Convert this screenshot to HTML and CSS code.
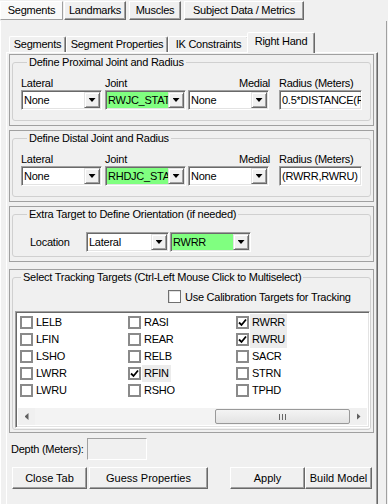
FILE: index.html
```html
<!DOCTYPE html>
<html lang="en">
  <head>
    <meta charset="UTF-8" />
    <title>Segments - Right Hand</title>
    <meta name="viewport" content="width=device-width, initial-scale=1.0" />
    <link rel="stylesheet" href="styles.css">
  </head>

  <body>
    <div class="win">
      <div class="top-tabs">
        <div class="top-tab w1 active">Segments</div>
        <div class="top-tab w2">Landmarks</div>
        <div class="top-tab w3">Muscles</div>
        <div class="top-tab w4">Subject Data / Metrics</div>
      </div>

      <div class="outer">
        <div class="tabs">
          <div class="tab t1">Segments</div>
          <div class="tab t2">Segment Properties</div>
          <div class="tab t3">IK Constraints</div>
          <div class="tab t4 active">Right Hand</div>
        </div>

        <div class="page">
          <!-- proximal -->
          <div class="panel">
            <div class="group joint-group">
              <div class="legend">Define Proximal Joint and Radius</div>
              <div class="fields">
                <div class="field col-lat">
                  <div class="lbl">Lateral</div>
                  <div class="combo"><span class="val">None</span><span class="drop"></span></div>
                </div>
                <div class="field col-joint">
                  <div class="lbl">Joint</div>
                  <div class="combo"><span class="val green">RWJC_STATIC</span><span class="drop"></span></div>
                </div>
                <div class="field col-med">
                  <div class="lbl right">Medial</div>
                  <div class="combo"><span class="val">None</span><span class="drop"></span></div>
                </div>
                <div class="field col-rad">
                  <div class="lbl">Radius (Meters)</div>
                  <div class="textbox"><span>0.5*DISTANCE(RWRR,RWRU)</span></div>
                </div>
              </div>
            </div>
          </div>

          <!-- distal -->
          <div class="panel">
            <div class="group joint-group">
              <div class="legend">Define Distal Joint and Radius</div>
              <div class="fields">
                <div class="field col-lat">
                  <div class="lbl">Lateral</div>
                  <div class="combo"><span class="val">None</span><span class="drop"></span></div>
                </div>
                <div class="field col-joint">
                  <div class="lbl">Joint</div>
                  <div class="combo"><span class="val green">RHDJC_STATIC</span><span class="drop"></span></div>
                </div>
                <div class="field col-med">
                  <div class="lbl right">Medial</div>
                  <div class="combo"><span class="val">None</span><span class="drop"></span></div>
                </div>
                <div class="field col-rad">
                  <div class="lbl">Radius (Meters)</div>
                  <div class="textbox"><span>(RWRR,RWRU)</span></div>
                </div>
              </div>
            </div>
          </div>

          <!-- extra target -->
          <div class="panel p3">
            <div class="group extra-group">
              <div class="legend">Extra Target to Define Orientation (if needed)</div>
              <div class="loc-row">
                <span class="loc-lbl">Location</span>
                <div class="combo loc1"><span class="val">Lateral</span><span class="drop"></span></div>
                <div class="combo loc2"><span class="val green">RWRR</span><span class="drop"></span></div>
              </div>
            </div>
          </div>

          <!-- tracking targets -->
          <div class="panel p4">
            <div class="group track-group">
              <div class="legend">Select Tracking Targets (Ctrl-Left Mouse Click to Multiselect)</div>
              <div class="calib">
                <span class="cb small"></span>
                <span>Use Calibration Targets for Tracking</span>
              </div>
              <div class="list">
                <div class="items" id="items"></div>
                <div class="hscroll">
                  <span class="arrow left"></span>
                  <div class="track"><div class="thumb"><span class="grip"></span></div></div>
                  <span class="arrow right"></span>
                </div>
              </div>
            </div>
          </div>

          <div class="depth-row">
            <span class="depth-lbl">Depth (Meters):</span>
            <div class="textbox disabled"></div>
          </div>

          <div class="actions">
            <button class="b-close">Close Tab</button>
            <button class="b-guess">Guess Properties</button>
            <button class="b-apply">Apply</button>
            <button class="b-build">Build Model</button>
          </div>
        </div>
      </div>
    </div>

    <script>
      // filled row by row, three columns like the checked list box
      const targets = [
        ["LELB", 0], ["RASI", 0], ["RWRR", 1],
        ["LFIN", 0], ["REAR", 0], ["RWRU", 1],
        ["LSHO", 0], ["RELB", 0], ["SACR", 0],
        ["LWRR", 0], ["RFIN", 1], ["STRN", 0],
        ["LWRU", 0], ["RSHO", 0], ["TPHD", 0],
      ];
      const tick =
        '<svg width="9" height="9" viewBox="0 0 9 9"><path d="M1 4.5 L3.5 7 L8 1.5" fill="none" stroke="#000" stroke-width="1.8"/></svg>';
      const box = document.getElementById("items");
      for (const [name, on] of targets) {
        box.innerHTML += `
          <div class="item${on ? " on" : ""}">
            <span class="cb">${on ? tick : ""}</span>
            <span class="name">${name}</span>
          </div>
        `;
      }
    </script>
  </body>
</html>
```

FILE: styles.css
```css
:root {
  --face: #f0f0f0;
  --light: #e3e3e3;
  --shadow: #a0a0a0;
  --dark: #696969;
  --green: #80ff80;
}

* {
  margin: 0;
  padding: 0;
  box-sizing: border-box;
}

body {
  font-family: "Liberation Sans", Arial, sans-serif;
  font-size: 11px;
  letter-spacing: -0.25px;
  color: #000;
  background: var(--face);
}

.win {
  width: 388px;
  height: 504px;
  overflow: hidden;
}

/* top button tabs */
.top-tabs {
  display: flex;
  height: 21px;
  padding-top: 1px;
}

.top-tab {
  height: 19px;
  line-height: 17px;
  text-align: center;
  border: 1px solid;
  border-color: #fff var(--dark) var(--dark) #fff;
  box-shadow: inset -1px -1px var(--shadow);
}

.top-tab.active {
  background: #f9f9f9;
  border-color: #fff var(--shadow) var(--shadow) #fff;
  box-shadow: none;
}

.w1 { width: 63px; }
.w2 { width: 62px; margin-left: 1px; }
.w3 { width: 52px; margin-left: 3px; }
.w4 { width: 120px; margin-left: 3px; }

/* outer page */
.outer {
  width: 387px;
  height: 483px;
  border-left: 1px solid #fff;
  border-right: 1px solid var(--shadow);
  padding-top: 11px;
}

.tabs {
  display: flex;
  align-items: flex-end;
  height: 20px;
  margin-left: 8px;
  position: relative;
  z-index: 1;
}

.tab {
  height: 16px;
  line-height: 14px;
  text-align: center;
  border: 1px solid;
  border-bottom: none;
  border-color: #fff var(--dark) transparent #fff;
  box-shadow: inset -1px 0 var(--shadow);
  border-radius: 2px 2px 0 0;
}

.t1 { width: 57px; }
.t2 { width: 102px; }
.t3 { width: 81px; }

.tab.active {
  width: 68px;
  height: 21px;
  margin-left: -2px;
  margin-bottom: -1px;
  line-height: 16px;
  background: var(--face);
}

.page {
  width: 372px;
  height: 460px;
  margin-left: 5px;
  border: 1px solid;
  border-color: #fff var(--dark) var(--dark) #fff;
  box-shadow: inset -1px 0 var(--shadow);
}

/* sections */
.panel {
  width: 365px;
  height: 72px;
  margin: 1px 0 4px 2px;
  border: 1px solid var(--shadow);
  padding: 7px 2px 0;
}

.panel + .panel {
  margin-top: 0;
}

.panel.p3 {
  height: 56px;
}

.panel.p4 {
  height: 164px;
  margin-top: 7px;
}

.group {
  border: 1px solid #d0d0d0;
  border-radius: 3px;
  padding: 0 8px;
}

.joint-group { height: 59px; }
.extra-group { height: 43px; }
.track-group { height: 153px; padding: 0 0 0 2px; }

.legend {
  width: fit-content;
  margin: -7px 0 0 6px;
  padding: 0 2px;
  line-height: 13px;
  background: var(--face);
}

.fields {
  display: flex;
  margin-top: 7px;
}

.lbl {
  height: 14px;
  line-height: 14px;
  white-space: nowrap;
}

.lbl.right {
  text-align: right;
  margin-right: -1px;
}

.col-lat { width: 81px; }
.col-joint { width: 81px; margin-left: 3px; }
.col-med { width: 81px; margin-left: 2px; }
.col-rad { width: 83px; margin-left: 10px; }

/* combo box */
.combo {
  display: flex;
  height: 20px;
  padding: 1px;
  border: 1px solid;
  border-color: var(--shadow) #fff #fff var(--shadow);
  box-shadow: inset 1px 1px var(--dark), inset -1px -1px var(--light);
  background: #fff;
}

.val {
  flex: 1;
  min-width: 0;
  padding-left: 1px;
  line-height: 16px;
  white-space: nowrap;
  overflow: hidden;
}

.val.green {
  background: var(--green);
}

.drop {
  width: 16px;
  flex: none;
  display: flex;
  align-items: center;
  justify-content: center;
  background: var(--face);
  border: 1px solid;
  border-color: var(--light) var(--dark) var(--dark) var(--light);
  box-shadow: inset 1px 1px #fff, inset -1px -1px var(--shadow);
}

.drop::after {
  content: "";
  width: 7px;
  height: 4px;
  background: #000;
  clip-path: polygon(0 0, 100% 0, 50% 100%);
}

.textbox {
  display: flex;
  height: 20px;
  padding: 1px 2px 0;
  line-height: 16px;
  white-space: nowrap;
  overflow: hidden;
  background: #fff;
  border: 1px solid;
  border-color: var(--shadow) #fff #fff var(--shadow);
  box-shadow: inset 1px 1px var(--dark), inset -1px -1px var(--light);
}

.textbox.disabled {
  width: 60px;
  height: 22px;
  background: var(--face);
  box-shadow: none;
}

/* extra target row */
.loc-row {
  display: flex;
  align-items: center;
  margin-top: 11px;
}

.loc-lbl {
  margin-left: 9px;
  width: 56px;
}

.loc1 { width: 83px; }
.loc2 { width: 81px; margin-left: 1px; }

/* tracking targets */
.calib {
  display: flex;
  align-items: center;
  gap: 4px;
  height: 13px;
  margin: 6px 0 0 153px;
}

.cb {
  width: 13px;
  height: 13px;
  flex: none;
  display: flex;
  align-items: center;
  justify-content: center;
  background: #fff;
  border: 2px solid #8a8a8a;
}

.cb.small {
  border: 1px solid #707070;
  box-shadow: inset 1px 1px #e0e0e0;
}

.list {
  width: 355px;
  height: 117px;
  margin-top: 8px;
  background: #fff;
  border: 1px solid;
  border-color: var(--shadow) #fff #fff var(--shadow);
  box-shadow: inset 1px 1px var(--dark), inset -1px -1px var(--light);
  padding: 2px;
  display: flex;
  flex-direction: column;
}

.items {
  flex: 1;
  display: grid;
  grid-template-columns: 108px 108px 108px;
  grid-auto-rows: 17px;
  padding-left: 2px;
}

.item {
  display: flex;
  align-items: center;
}

.item .name {
  margin-left: 1px;
  padding: 0 2px;
  line-height: 17px;
}

.item.on .name {
  background: #ececec;
}

.hscroll {
  display: flex;
  height: 17px;
  background: #ececec;
}

.arrow {
  width: 17px;
  display: flex;
  align-items: center;
  justify-content: center;
  background: var(--face);
}

.arrow::after {
  content: "";
  width: 4px;
  height: 7px;
  background: #606060;
}

.arrow.left::after {
  clip-path: polygon(100% 0, 100% 100%, 0 50%);
}

.arrow.right::after {
  clip-path: polygon(0 0, 0 100%, 100% 50%);
}

.track {
  flex: 1;
  display: flex;
  justify-content: flex-end;
  padding: 1px 0;
  background: #f3f3f3;
}

.thumb {
  width: 135px;
  border: 1px solid #999;
  border-radius: 2px;
  background: linear-gradient(#f4f4f4, #e3e3e3);
  display: flex;
  align-items: center;
  justify-content: center;
}

.grip {
  width: 7px;
  height: 6px;
  background: repeating-linear-gradient(90deg, #666 0 1px, transparent 1px 3px);
}

/* bottom */
.depth-row {
  display: flex;
  align-items: center;
  margin: 5px 0 0 4px;
}

.depth-lbl {
  width: 76px;
}

.actions {
  display: flex;
  margin: 7px 0 0 5px;
}

button {
  height: 22px;
  font: inherit;
  color: #000;
  background: var(--face);
  border: 1px solid;
  border-color: #fff var(--dark) var(--dark) #fff;
  box-shadow: inset -1px -1px var(--shadow);
}

.b-close { width: 75px; }
.b-guess { width: 119px; margin-left: 2px; }
.b-apply { width: 75px; margin-left: 22px; }
.b-build { width: 67px; }
```
